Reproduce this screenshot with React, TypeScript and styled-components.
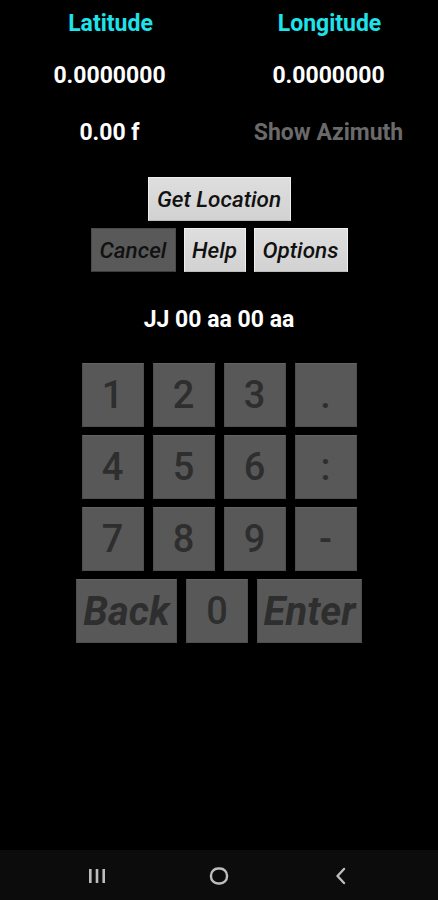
import { FC } from "react";
import styled, { createGlobalStyle } from "styled-components";

const GlobalStyle = createGlobalStyle`
  html, body {
    margin: 0;
    padding: 0;
    background: #000;
  }
  body {
    font-family: Roboto, "Noto Sans", "Liberation Sans", sans-serif;
  }
`;

const digitRows = [
  ["1", "2", "3", "."],
  ["4", "5", "6", ":"],
  ["7", "8", "9", "-"],
];

const App: FC = () => {
  return (
    <>
      <GlobalStyle />
      <StScreen>
        <StMain>
          <StReadout>
            <StLabel>Latitude</StLabel>
            <StLabel>Longitude</StLabel>
            <StValue>0.0000000</StValue>
            <StValue>0.0000000</StValue>
            <StValue>0.00 f</StValue>
            <StValue $muted>Show Azimuth</StValue>
          </StReadout>

          <StActions>
            <StActionRow>
              <StAction $w={143}>Get Location</StAction>
            </StActionRow>
            <StActionRow>
              <StAction $w={85} $dark>
                Cancel
              </StAction>
              <StAction $w={62}>Help</StAction>
              <StAction $w={94}>Options</StAction>
            </StActionRow>
          </StActions>

          <StLocator>JJ 00 aa 00 aa</StLocator>

          <StKeypad>
            {digitRows.map((row, i) => (
              <StKeyRow key={i}>
                {row.map((k) => (
                  <StKey key={k} $w={62}>
                    {k}
                  </StKey>
                ))}
              </StKeyRow>
            ))}
            <StKeyRow>
              <StKey $w={101} $word>
                Back
              </StKey>
              <StKey $w={62}>0</StKey>
              <StKey $w={105} $word>
                Enter
              </StKey>
            </StKeyRow>
          </StKeypad>
        </StMain>

        <StNavBar>
          <StNavSlot>
            <svg width="20" height="16" viewBox="0 0 20 16">
              <rect x="2" y="1" width="2.6" height="14" fill="#bdbdbd" />
              <rect x="8.7" y="1" width="2.6" height="14" fill="#bdbdbd" />
              <rect x="15.4" y="1" width="2.6" height="14" fill="#bdbdbd" />
            </svg>
          </StNavSlot>
          <StNavSlot>
            <svg width="20" height="20" viewBox="0 0 20 20">
              <rect
                x="2"
                y="2.5"
                width="16"
                height="15"
                rx="7"
                fill="none"
                stroke="#bdbdbd"
                strokeWidth="2.4"
              />
            </svg>
          </StNavSlot>
          <StNavSlot>
            <svg width="16" height="18" viewBox="0 0 16 18">
              <path
                d="M11 2 L4.5 9 L11 16"
                fill="none"
                stroke="#bdbdbd"
                strokeWidth="2.4"
                strokeLinecap="round"
                strokeLinejoin="round"
              />
            </svg>
          </StNavSlot>
        </StNavBar>
      </StScreen>
    </>
  );
};

export default App;

const StScreen = styled.div`
  width: 438px;
  height: 900px;
  display: flex;
  flex-direction: column;
  background: #000;
  overflow: hidden;
`;

const StMain = styled.div`
  flex: 1;
  display: flex;
  flex-direction: column;
  align-items: center;
`;

const StReadout = styled.div`
  width: 100%;
  display: grid;
  grid-template-columns: 219px 219px;
  grid-template-rows: 47px 56px 58px;
  align-items: center;
  justify-items: center;
`;

const StLabel = styled.div`
  color: #1ee3ea;
  font-size: 23px;
  font-weight: 700;
  padding-left: 2px;
`;

const StValue = styled.div<{ $muted?: boolean }>`
  color: ${(p) => (p.$muted ? "#6a6a6a" : "#ffffff")};
  font-size: 23px;
  font-weight: 700;
`;

const StActions = styled.div`
  margin-top: 16px;
  display: flex;
  flex-direction: column;
  gap: 7px;
`;

const StActionRow = styled.div`
  display: flex;
  justify-content: center;
  gap: 8px;
`;

const StAction = styled.button<{ $w: number; $dark?: boolean }>`
  width: ${(p) => p.$w}px;
  height: 44px;
  padding: 0;
  margin: 0;
  border: 1px solid ${(p) => (p.$dark ? "#4a4a4a" : "#eeeeee")};
  border-bottom-color: ${(p) => (p.$dark ? "#3c3c3c" : "#bcbcbc")};
  background: ${(p) =>
    p.$dark ? "#595959" : "linear-gradient(#dedede, #d2d2d2)"};
  color: #111;
  font-family: Roboto, "Noto Sans", sans-serif;
  font-size: 22.5px;
  font-style: italic;
  font-weight: 500;
  white-space: nowrap;
  display: flex;
  align-items: center;
  justify-content: center;
`;

const StLocator = styled.div`
  margin-top: 36px;
  height: 24px;
  line-height: 24px;
  color: #ffffff;
  font-size: 23px;
  font-weight: 700;
`;

const StKeypad = styled.div`
  margin-top: 31px;
  display: flex;
  flex-direction: column;
  gap: 8px;
`;

const StKeyRow = styled.div`
  display: flex;
  justify-content: center;
  gap: 9px;
`;

const StKey = styled.div<{ $w: number; $word?: boolean }>`
  width: ${(p) => p.$w}px;
  height: 64px;
  box-sizing: border-box;
  background: #585858;
  border: 1px solid #4e4e4e;
  border-top-color: #636363;
  color: #2e2e2e;
  font-size: ${(p) => (p.$word ? "40px" : "38px")};
  font-style: ${(p) => (p.$word ? "italic" : "normal")};
  font-weight: ${(p) => (p.$word ? 700 : 500)};
  white-space: nowrap;
  display: flex;
  align-items: center;
  justify-content: center;
`;

const StNavBar = styled.div`
  height: 50px;
  background: #0c0c0c;
  display: grid;
  grid-template-columns: 196px 48px 196px;
  justify-content: center;
  align-items: center;
`;

const StNavSlot = styled.div`
  display: flex;
  justify-content: center;
  align-items: center;
  padding-top: 2px;
`;
